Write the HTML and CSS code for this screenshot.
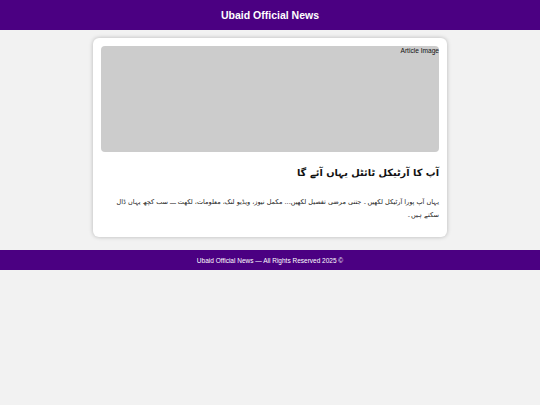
FILE: index.html
```
<!DOCTYPE html>
<html lang="ur">
<head>
<meta charset="utf-8">
<link rel="stylesheet" href="styles.css">
</head>
<body>
<header class="site-header">
  <h1 class="site-title">Ubaid Official News</h1>
</header>
<main class="content">
  <article class="card" dir="rtl">
    <div class="thumb"><span class="thumb-alt">Article Image</span></div>
    <h2 class="card-title">آپ کا آرٹیکل ٹائٹل یہاں آئے گا</h2>
    <p class="card-text">یہاں آپ پورا آرٹیکل لکھیں۔ جتنی مرضی تفصیل لکھیں... مکمل نیوز، ویڈیو لنک، معلومات، لکھت ـــ سب کچھ یہاں ڈال سکتے ہیں۔</p>
  </article>
</main>
<footer class="site-footer">Ubaid Official News — All Rights Reserved 2025 ©</footer>
</body>
</html>
```
FILE: styles.css
```
html, body {
  margin: 0;
  padding: 0;
}
body {
  background: #f2f2f2;
  font-family: "Liberation Sans", Arial, sans-serif;
  color: #222;
}
.site-header {
  background: #4b0082;
  height: 30px;
  display: flex;
  align-items: center;
  justify-content: center;
}
.site-title {
  margin: 0;
  color: #fff;
  font-size: 10.5px;
  font-weight: bold;
}
.content {
  padding: 8px 93px 13px;
}
.card {
  background: #fff;
  border-radius: 6px;
  box-shadow: 0 0 4px rgba(0,0,0,0.25);
  padding: 8px 8px 15px;
  font-family: "DejaVu Sans", "Liberation Sans", sans-serif;
}
.thumb {
  height: 106px;
  background: #cccccc;
  border-radius: 4px;
  display: flex;
  justify-content: flex-start;
  align-items: flex-start;
}
.thumb-alt {
  font-family: "Liberation Sans", Arial, sans-serif;
  font-size: 6.6px;
  color: #111;
  margin-top: 1px;
}
.card-title {
  margin: 13px 0 0;
  font-size: 9.8px;
  font-weight: bold;
  color: #111;
  line-height: 16px;
}
.card-text {
  margin: 15px 0 0;
  font-size: 6.5px;
  line-height: 13px;
  color: #222;
}
.site-footer {
  background: #4b0082;
  color: #fff;
  height: 20px;
  display: flex;
  align-items: center;
  justify-content: center;
  font-size: 6.5px;
}
```
